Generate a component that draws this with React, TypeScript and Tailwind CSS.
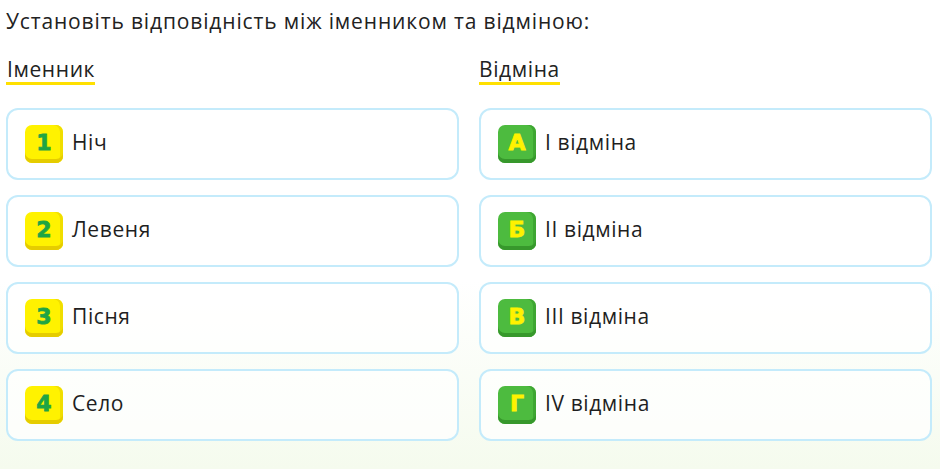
const LEFT = [
  { key: '1', label: 'Ніч' },
  { key: '2', label: 'Левеня' },
  { key: '3', label: 'Пісня' },
  { key: '4', label: 'Село' },
];

const RIGHT = [
  { key: 'А', label: 'І відміна' },
  { key: 'Б', label: 'ІІ відміна' },
  { key: 'В', label: 'ІІІ відміна' },
  { key: 'Г', label: 'IV відміна' },
];

function Badge({ k, green }: { k: string; green?: boolean }) {
  return (
    <div
      className={[
        'flex h-[38px] w-[38px] shrink-0 items-center justify-center rounded-[7px] pb-[3px] text-[22px] font-black leading-none',
        green
          ? 'bg-[#4dbb3f] text-[#fff200] shadow-[inset_0_-4px_0_#37982c,inset_-3px_0_0_#3ea632]'
          : 'bg-[#fff200] text-[#1fa544] shadow-[inset_0_-4px_0_#e5cc00,inset_-3px_0_0_#f0de00]',
      ].join(' ')}
      style={{ fontFamily: '"DejaVu Sans", sans-serif', WebkitTextStroke: '0.8px currentColor' }}
    >
      {k}
    </div>
  );
}

function Card({ k, label, green }: { k: string; label: string; green?: boolean }) {
  return (
    <div className="flex h-[72px] items-center gap-[9px] rounded-[12px] border-2 border-[#c4ebfb] bg-white/70 pl-[17px]">
      <Badge k={k} green={green} />
      <span className="pb-[2px] text-[21px] tracking-[0.6px] text-[#1f1f1f]">{label}</span>
    </div>
  );
}

export default function App() {
  return (
    <div
      className="h-[469px] w-[940px] overflow-hidden bg-gradient-to-b from-white from-60% to-[#f5fbee] pl-[6px] pr-[8px] text-[#222]"
      style={{ fontFamily: '"Open Sans", "Noto Sans", sans-serif' }}
    >
      <p className="pt-[6px] text-[21px] leading-[30px] tracking-[0.85px]">Установіть відповідність між іменником та відміною:</p>
      <div className="mt-[20px] grid grid-cols-2 gap-x-[20px]">
        <div>
          <div className="mb-[22px] h-[30px]">
            <span className="inline-block border-b-[3px] border-[#ffe000] pl-[1px] text-[21px] leading-[26px] tracking-[0.6px]">Іменник</span>
          </div>
          <div className="flex flex-col gap-[15px]">
            {LEFT.map((r) => (
              <Card key={r.key} k={r.key} label={r.label} />
            ))}
          </div>
        </div>
        <div>
          <div className="mb-[22px] h-[30px]">
            <span className="inline-block border-b-[3px] border-[#ffe000] text-[21px] leading-[26px] tracking-[0.6px]">Відміна</span>
          </div>
          <div className="flex flex-col gap-[15px]">
            {RIGHT.map((r) => (
              <Card key={r.key} k={r.key} label={r.label} green />
            ))}
          </div>
        </div>
      </div>
    </div>
  );
}
